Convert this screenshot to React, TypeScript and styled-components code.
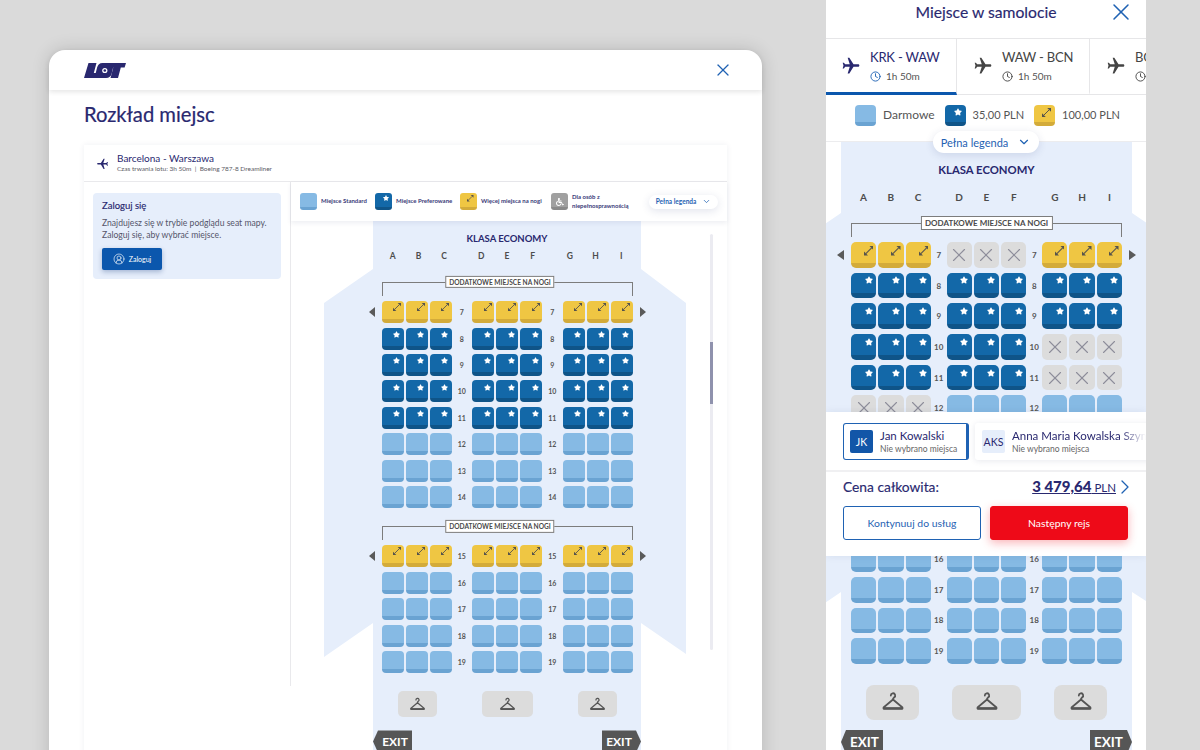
import React from 'react';
import styled, { createGlobalStyle, ThemeProvider } from 'styled-components';
import { Clock, ChevronDown, ChevronRight, CircleUserRound, X } from 'lucide-react';
import { FaStar, FaWheelchair } from 'react-icons/fa';
import { MdFlight } from 'react-icons/md';

const NAVY = '#29286f';
const BLUE = '#1f62b3';
const CABIN = '#e6eefb';
const FONT = 'Lato, "Noto Sans", sans-serif';

type SeatKind = 'std' | 'pref' | 'extra' | 'taken';

const SEAT_COLORS: Record<SeatKind, [string, string]> = {
  std: ['#86bae4', '#6aa3d2'],
  pref: ['#1368a8', '#0f5488'],
  extra: ['#efc643', '#d3ab3a'],
  taken: ['#dcdcdc', '#dcdcdc'],
};

// seat map proportions for the modal and for the phone view
const desktopMap = {
  seat: 22,
  seatH: 22,
  aisle: 20.5,
  rowGap: 4.4,
  radius: 4,
  band: 4,
  numSize: 7,
  star: 7,
  arrow: 8,
  arrowPadTop: 2,
  arrowPadRight: 2.3,
  cross: 19,
  iconPad: 3.2,
  width: 268,
  classSize: 9.5,
  classTop: 11.5,
  letterCell: 25.7,
  letterGroup: 11.5,
  letterSize: 8.5,
  letterTop: 6.5,
  bracketTop: 21,
  bracketWidth: 251,
  labelSize: 6.6,
  labelPad: 3,
  labelShift: -7,
  arrowH: 5,
  arrowW: 6,
  arrowGap: 7,
  sectionGap: 18.5,
  wingOut: 49,
  wingOutRight: 45,
  wingTop: 48,
  wingBody: 354,
  wingDrop: 34,
  hangerH: 26,
  hangerW: 39,
  hangerMid: 51,
  hangerGap: 45,
  hangerTop: 18.5,
  hangerRadius: 5,
  hangerIcon: 17,
  exitW: 39,
  exitH: 22,
  exitSize: 12,
  exitTop: 13,
};

const phoneMap = {
  ...desktopMap,
  seat: 25.33,
  seatH: 25.7,
  aisle: 15.5,
  rowGap: 5,
  radius: 5,
  band: 4.5,
  numSize: 8,
  star: 8,
  arrow: 9.5,
  arrowPadTop: 4,
  arrowPadRight: 3,
  cross: 22,
  iconPad: 3.8,
  width: 291,
  classSize: 11.3,
  classTop: 22,
  letterCell: 27.33,
  letterGroup: 13.7,
  letterSize: 10,
  letterTop: 15,
  bracketTop: 20,
  bracketWidth: 271,
  labelSize: 8,
  labelPad: 3.5,
  labelShift: 0,
  arrowH: 5.5,
  arrowW: 7,
  arrowGap: 7,
  sectionGap: 14,
  wingOut: 70,
  wingOutRight: 70,
  wingTop: 71,
  wingBody: 379,
  wingDrop: 48,
  hangerH: 35,
  hangerW: 53,
  hangerMid: 69,
  hangerGap: 33,
  hangerTop: 21,
  hangerRadius: 8,
  hangerIcon: 24,
  exitW: 42,
  exitH: 24,
  exitSize: 13.5,
  exitTop: 10,
};

type MapTheme = typeof desktopMap;
const px = (key: keyof MapTheme) => ({ theme }: { theme: any }) => `${(theme as MapTheme)[key]}px`;

const MapContext = React.createContext<MapTheme>(desktopMap);

const GlobalStyle = createGlobalStyle`
  html, body {
    margin: 0;
    height: 750px;
    overflow: hidden;
    background: #dadada;
    font-family: ${FONT};
    color: ${NAVY};
  }
  * { box-sizing: border-box; }
`;

const Stage = styled.div`
  display: flex;
  align-items: flex-start;
  gap: 64px;
  width: 1200px;
  height: 750px;
  padding-left: 49px;
  overflow: hidden;
`;

/* ---------- seat map ---------- */

const Fuselage = styled.div`
  position: relative;
  display: flex;
  flex-direction: column;
  align-items: center;
  width: ${px('width')};
  background: ${CABIN};
  flex-shrink: 0;
`;

const Wings = styled.div`
  position: absolute;
  top: ${px('wingTop')};
  left: calc(${px('wingOut')} * -1);
  right: calc(${px('wingOutRight')} * -1);
  height: calc(${px('wingBody')} + ${px('wingDrop')});
  background: ${CABIN};
  clip-path: polygon(
    ${px('wingOut')} 0,
    calc(100% - ${px('wingOutRight')}) 0,
    100% ${px('wingDrop')},
    100% calc(100% - 3px),
    calc(100% - ${px('wingOutRight')}) ${px('wingBody')},
    ${px('wingOut')} ${px('wingBody')},
    0 100%,
    0 ${px('wingDrop')}
  );
`;

const ClassName = styled.div`
  position: relative;
  margin-top: ${px('classTop')};
  font-size: ${px('classSize')};
  line-height: 12px;
  font-weight: 700;
  color: ${NAVY};
`;

const Letters = styled.div`
  position: relative;
  display: flex;
  gap: ${px('letterGroup')};
  margin-top: ${px('letterTop')};
`;

const LetterGroup = styled.div`
  display: flex;
`;

const Letter = styled.span`
  width: ${px('letterCell')};
  text-align: center;
  font-size: ${px('letterSize')};
  line-height: 1.2;
  font-weight: 700;
  color: #4c4c4c;
`;

const Bracket = styled.div<{ $first?: boolean }>`
  position: relative;
  width: ${px('bracketWidth')};
  height: 14px;
  margin-top: ${({ $first, theme }) => ($first ? theme.bracketTop : theme.sectionGap)}px;
  margin-bottom: 5px;
  border: 1px solid #7c7c7c;
  border-bottom: none;
`;

const BracketLabel = styled.span`
  position: absolute;
  top: -1px;
  left: calc(50% + ${px('labelShift')});
  transform: translate(-50%, -50%);
  padding: 1px ${px('labelPad')};
  background: #fff;
  border: 1px solid #7c7c7c;
  font-size: ${px('labelSize')};
  line-height: 1.25;
  font-weight: 700;
  white-space: nowrap;
  color: #4a4a4a;
`;

const SeatRows = styled.div`
  position: relative;
  display: flex;
  flex-direction: column;
  gap: ${px('rowGap')};
`;

const Row = styled.div`
  display: flex;
  align-items: center;
  margin: 0 calc((${px('arrowW')} + ${px('arrowGap')}) * -1);
`;

const SeatGroup = styled.div`
  display: flex;
  gap: 2px;
`;

const RowNumber = styled.span`
  width: ${px('aisle')};
  text-align: center;
  font-size: ${px('numSize')};
  font-weight: 700;
  color: #555;
`;

const ExitArrow = styled.span<{ $side: 'left' | 'right'; $show: boolean }>`
  width: 0;
  height: 0;
  visibility: ${({ $show }) => ($show ? 'visible' : 'hidden')};
  border-style: solid;
  border-color: transparent;
  border-width: ${px('arrowH')} 0;
  ${({ $side, theme }) =>
    $side === 'left'
      ? `border-right: ${theme.arrowW}px solid #5a5a5a; margin-right: ${theme.arrowGap}px;`
      : `border-left: ${theme.arrowW}px solid #5a5a5a; margin-left: ${theme.arrowGap}px;`}
`;

const seatPadding = (kind: SeatKind, theme: any) => {
  if (kind === 'pref') return `${theme.iconPad}px`;
  if (kind === 'extra') return `${theme.arrowPadTop}px ${theme.arrowPadRight}px`;
  return '0';
};

const Seat = styled.div<{ $kind: SeatKind }>`
  display: flex;
  justify-content: ${({ $kind }) => ($kind === 'taken' ? 'center' : 'flex-end')};
  align-items: ${({ $kind }) => ($kind === 'taken' ? 'center' : 'flex-start')};
  width: ${px('seat')};
  height: ${px('seatH')};
  padding: ${({ $kind, theme }) => seatPadding($kind, theme)};
  border-radius: ${px('radius')};
  background: ${({ $kind, theme }) =>
    `linear-gradient(${SEAT_COLORS[$kind][0]} calc(100% - ${theme.band}px), ${SEAT_COLORS[$kind][1]} 0)`};
  color: ${({ $kind }) => ($kind === 'pref' ? '#fff' : $kind === 'extra' ? '#55534c' : '#8d8d9a')};
`;

const Wardrobes = styled.div`
  position: relative;
  display: flex;
  justify-content: center;
  gap: ${px('hangerGap')};
  margin-top: ${px('hangerTop')};
`;

const Wardrobe = styled.div<{ $wide?: boolean }>`
  display: flex;
  align-items: center;
  justify-content: center;
  width: ${({ $wide, theme }) => ($wide ? theme.hangerMid : theme.hangerW)}px;
  height: ${px('hangerH')};
  border-radius: ${px('hangerRadius')};
  background: #dcdcdc;
`;

const Exits = styled.div`
  position: relative;
  display: flex;
  justify-content: space-between;
  width: 100%;
  margin-top: ${px('exitTop')};
`;

const ExitTag = styled.div<{ $side: 'left' | 'right' }>`
  display: flex;
  align-items: center;
  justify-content: center;
  width: ${px('exitW')};
  height: ${px('exitH')};
  padding-${({ $side }) => $side}: 5px;
  background: #565656;
  color: #fff;
  font-size: ${px('exitSize')};
  font-weight: 700;
  clip-path: ${({ $side }) =>
    $side === 'left'
      ? 'polygon(5px 0, 100% 0, 100% 100%, 5px 100%, 0 50%)'
      : 'polygon(0 0, calc(100% - 5px) 0, 100% 50%, calc(100% - 5px) 100%, 0 100%)'};
`;

const LegroomIcon: React.FC<{ size: number }> = ({ size }) => (
  <svg width={size} height={size} viewBox="0 0 10 10" fill="currentColor">
    <path d="M2 8 8 2" stroke="currentColor" strokeWidth="1.100" />
    <polygon points="10,0 10,4.200 5.800,0" />
    <polygon points="0,10 0,5.800 4.200,10" />
  </svg>
);

const HangerIcon: React.FC = () => {
  const { hangerIcon } = React.useContext(MapContext);
  return (
    <svg width={hangerIcon} height={hangerIcon} viewBox="0 0 24 24" fill="none" stroke="#555" strokeWidth="1.800">
      <path d="M9.800 5.500a2.200 2.200 0 1 1 3.300 1.900c-.7.5-1.100 1-1.100 2" strokeLinecap="round" />
      <path d="M12 9.500 2.800 17.200c-.5.500-.2 1.100.5 1.100h17.400c.7 0 1-.6.500-1.100z" strokeLinejoin="round" />
      <path d="M3 18.500h18" strokeWidth="2.600" strokeLinecap="round" />
    </svg>
  );
};

const SeatGlyph: React.FC<{ kind: SeatKind }> = ({ kind }) => {
  const map = React.useContext(MapContext);
  if (kind === 'pref') return <FaStar size={map.star} />;
  if (kind === 'extra') return <LegroomIcon size={map.arrow} />;
  if (kind === 'taken') return <X size={map.cross} strokeWidth={1.200} />;
  return null;
};

const COLUMNS = ['ABC', 'DEF', 'GHI'];

type RowData = { n: number; seats: [SeatKind, SeatKind, SeatKind] };

const uniform = (from: number, to: number, kind: SeatKind): RowData[] =>
  Array.from({ length: to - from + 1 }, (_, i) => ({ n: from + i, seats: [kind, kind, kind] }));

const SeatSection: React.FC<{ rows: RowData[]; first?: boolean }> = ({ rows, first }) => (
  <>
    <Bracket $first={first}>
      <BracketLabel>DODATKOWE MIEJSCE NA NOGI</BracketLabel>
    </Bracket>
    <SeatRows>
      {rows.map((row, index) => (
        <Row key={row.n}>
          <ExitArrow $side="left" $show={index === 0} />
          {row.seats.map((kind, group) => (
            <React.Fragment key={group}>
              <SeatGroup>
                {[0, 1, 2].map((i) => (
                  <Seat key={i} $kind={kind}>
                    <SeatGlyph kind={kind} />
                  </Seat>
                ))}
              </SeatGroup>
              {group < 2 && <RowNumber>{row.n}</RowNumber>}
            </React.Fragment>
          ))}
          <ExitArrow $side="right" $show={index === 0} />
        </Row>
      ))}
    </SeatRows>
  </>
);

const SeatMap: React.FC<{ map: MapTheme; upper: RowData[]; lower: RowData[] }> = ({ map, upper, lower }) => (
  <ThemeProvider theme={map}>
    <MapContext.Provider value={map}>
      <Fuselage>
        <Wings />
        <ClassName>KLASA ECONOMY</ClassName>
        <Letters>
          {COLUMNS.map((col) => (
            <LetterGroup key={col}>
              {col.split('').map((l) => (
                <Letter key={l}>{l}</Letter>
              ))}
            </LetterGroup>
          ))}
        </Letters>
        <SeatSection rows={upper} first />
        <SeatSection rows={lower} />
        <Wardrobes>
          <Wardrobe>
            <HangerIcon />
          </Wardrobe>
          <Wardrobe $wide>
            <HangerIcon />
          </Wardrobe>
          <Wardrobe>
            <HangerIcon />
          </Wardrobe>
        </Wardrobes>
        <Exits>
          <ExitTag $side="left">EXIT</ExitTag>
          <ExitTag $side="right">EXIT</ExitTag>
        </Exits>
      </Fuselage>
    </MapContext.Provider>
  </ThemeProvider>
);

/* ---------- legend chips ---------- */

const Chip = styled.div<{ $kind: SeatKind | 'access'; $size: number }>`
  display: flex;
  justify-content: ${({ $kind }) => ($kind === 'access' ? 'center' : 'flex-end')};
  align-items: ${({ $kind }) => ($kind === 'access' ? 'center' : 'flex-start')};
  padding: ${({ $kind, $size }) => ($kind === 'access' ? 0 : `${$size * 0.14}px ${$size * 0.18}px`)};
  flex-shrink: 0;
  width: ${({ $size }) => $size}px;
  height: ${({ $size }) => $size}px;
  border-radius: ${({ $size }) => Math.round($size * 0.2)}px;
  background: ${({ $kind, $size }) =>
    $kind === 'access'
      ? 'linear-gradient(#a0a0a0 80%, #8a8a8a 0)'
      : `linear-gradient(${SEAT_COLORS[$kind][0]} ${$size - Math.round($size * 0.2)}px, ${SEAT_COLORS[$kind][1]} 0)`};
  color: ${({ $kind }) => ($kind === 'extra' ? '#55534c' : '#fff')};
`;

const LegendPill = styled.div`
  display: flex;
  align-items: center;
  justify-content: center;
  background: #fff;
  color: ${BLUE};
  white-space: nowrap;
  box-shadow: 0 2px 8px rgba(40, 60, 120, 0.14);
`;

/* ---------- desktop modal ---------- */

const Modal = styled.div`
  width: 713px;
  height: 760px;
  margin-top: 50px;
  background: #fff;
  border-radius: 16px 16px 0 0;
  box-shadow: 0 0 18px rgba(0, 0, 0, 0.16);
  flex-shrink: 0;
`;

const ModalHeader = styled.header`
  display: flex;
  align-items: center;
  justify-content: space-between;
  height: 40px;
  padding: 0 29px 0 35px;
  border-radius: 16px 16px 0 0;
  box-shadow: 0 2px 5px rgba(0, 0, 0, 0.1);
`;

const CloseButton = styled.span`
  display: flex;
  color: ${BLUE};
`;

const ModalBody = styled.div`
  padding: 0 35px;
`;

const PageTitle = styled.h1`
  margin: 12px 0 18px;
  font-size: 20.2px;
  line-height: 25px;
  font-weight: 400;
  color: ${NAVY};
  -webkit-text-stroke: 0.2px ${NAVY};
`;

const FlightCard = styled.section`
  width: 643px;
  background: #fff;
  box-shadow: 0 0 6px rgba(30, 40, 90, 0.07);
`;

const FlightHead = styled.div`
  display: flex;
  align-items: center;
  gap: 8px;
  height: 37px;
  padding-left: 12px;
  border-bottom: 1px solid #e9e9ec;
  color: ${NAVY};
`;

const FlightName = styled.div`
  font-size: 10px;
  line-height: 11px;
  color: ${NAVY};
`;

const FlightMeta = styled.div`
  font-size: 6.5px;
  line-height: 9px;
  color: #5b5b66;
`;

const FlightColumns = styled.div`
  display: flex;
`;

const Sidebar = styled.aside`
  width: 207px;
  height: 504px;
  padding: 11px 9px;
  border-right: 1px solid #e9e9ec;
  flex-shrink: 0;
`;

const LoginBox = styled.div`
  height: 86px;
  padding: 7px 9px;
  border-radius: 4px;
  background: ${CABIN};
`;

const LoginTitle = styled.div`
  font-size: 9.5px;
  line-height: 12px;
  color: ${NAVY};
  -webkit-text-stroke: 0.15px ${NAVY};
`;

const LoginText = styled.p`
  margin: 5px 0 7px;
  font-size: 8.6px;
  line-height: 12px;
  white-space: nowrap;
  color: #55556a;
`;

const LoginButton = styled.button`
  display: flex;
  align-items: center;
  justify-content: center;
  gap: 4px;
  width: 60px;
  height: 22px;
  padding: 0;
  border: none;
  border-radius: 2px;
  background: #0b57ad;
  color: #fff;
  font-family: ${FONT};
  font-size: 7px;
  box-shadow: 0 2px 5px rgba(10, 50, 120, 0.3);
`;

const MapPane = styled.div`
  position: relative;
  flex: 1;
  min-width: 0;
`;

const DeskLegend = styled.div`
  position: relative;
  z-index: 2;
  display: flex;
  align-items: center;
  height: 39px;
  padding: 0 9px;
  background: #fff;
  box-shadow: 0 2px 5px rgba(30, 40, 90, 0.08);
`;

const DeskLegendItem = styled.div<{ $width: number }>`
  display: flex;
  align-items: center;
  gap: 4px;
  width: ${({ $width }) => $width}px;
  font-size: 6px;
  line-height: 8.5px;
  font-weight: 700;
  color: #3a3a78;
  flex-shrink: 0;
`;

const DeskPill = styled(LegendPill)`
  gap: 6px;
  width: 69px;
  height: 14px;
  margin-left: auto;
  border-radius: 7px;
  font-size: 6.5px;
  font-weight: 700;
`;

const PaneScroll = styled.div`
  padding-left: 82px;
  height: 700px;
`;

const ScrollTrack = styled.div`
  position: absolute;
  top: 52px;
  left: 419px;
  width: 3px;
  height: 416px;
  border-radius: 2px;
  background: #ebebf1;
`;

const ScrollThumb = styled.div`
  width: 100%;
  height: 62px;
  margin-top: 108px;
  background: #8f92ad;
`;

/* ---------- phone view ---------- */

const Phone = styled.div`
  position: relative;
  width: 320px;
  height: 750px;
  background: #fff;
  overflow: hidden;
  flex-shrink: 0;
`;

const PhoneHeader = styled.header`
  position: relative;
  display: flex;
  align-items: center;
  justify-content: center;
  height: 39px;
  padding-bottom: 15px;
  border-bottom: 1px solid #e6e6e8;
  font-size: 15.7px;
  color: ${NAVY};
  -webkit-text-stroke: 0.15px ${NAVY};
`;

const PhoneClose = styled.span`
  position: absolute;
  top: -2px;
  right: 11px;
  display: flex;
  color: ${BLUE};
`;

const Tabs = styled.nav`
  display: flex;
  height: 56px;
  border-bottom: 1px solid #e6e6e8;
`;

const Tab = styled.div<{ $active?: boolean; $width: number }>`
  display: flex;
  align-items: center;
  gap: 9px;
  width: ${({ $width }) => $width}px;
  padding-left: ${({ $active }) => ($active ? 15 : 16)}px;
  border-right: 1px solid #e6e6e8;
  border-bottom: 3px solid ${({ $active }) => ($active ? '#0b57ad' : 'transparent')};
  margin-bottom: -1px;
  color: ${({ $active }) => ($active ? NAVY : '#444')};
  flex-shrink: 0;
  overflow: hidden;
`;

const TabRoute = styled.div`
  font-size: 13px;
  line-height: 17px;
  letter-spacing: -0.2px;
  white-space: nowrap;
`;

const TabTime = styled.div<{ $active?: boolean }>`
  display: flex;
  align-items: center;
  gap: 5px;
  margin-top: 4px;
  font-size: 10px;
  line-height: 13px;
  color: #555;
  svg {
    color: ${({ $active }) => ($active ? BLUE : '#444')};
  }
`;

const PriceLegend = styled.div`
  position: relative;
  z-index: 2;
  display: flex;
  gap: 10px;
  height: 47px;
  padding: 10px 0 0 29px;
  background: #fff;
  border-bottom: 1px solid #ececee;
`;

const PriceItem = styled.div<{ $price?: boolean }>`
  display: flex;
  align-items: flex-start;
  align-self: flex-start;
  gap: 7px;
  font-size: ${({ $price }) => ($price ? 11 : 12)}px;
  line-height: 20px;
  color: #555;
  white-space: nowrap;
`;

const PhonePill = styled(LegendPill)`
  position: absolute;
  top: 131px;
  left: 107px;
  z-index: 3;
  gap: 9px;
  width: 106px;
  height: 22px;
  border-radius: 11px;
  font-size: 11px;
`;

const PhoneScroll = styled.div`
  padding-left: 15px;
`;

const BottomPanel = styled.div`
  position: absolute;
  top: 412px;
  left: 0;
  z-index: 4;
  width: 100%;
  height: 144px;
  background: #fff;
  box-shadow: 0 0 8px rgba(30, 40, 90, 0.08);
`;

const Passengers = styled.div`
  display: flex;
  gap: 6px;
  height: 60px;
  padding: 11px 0 0 17px;
  border-bottom: 2px solid #f0f0f2;
  overflow: hidden;
`;

const PassengerCard = styled.div<{ $active?: boolean }>`
  display: flex;
  align-items: center;
  gap: 7px;
  height: 37px;
  padding-left: 7px;
  border-radius: 3px;
  flex-shrink: 0;
  background: #fff;
  ${({ $active }) =>
    $active
      ? `width: 126px; padding-left: 6px; border: 1px solid ${BLUE}; border-right-width: 3px;`
      : 'width: 190px; box-shadow: 0 1px 6px rgba(30, 40, 90, 0.1);'}
`;

const Avatar = styled.span<{ $active?: boolean }>`
  display: flex;
  align-items: center;
  justify-content: center;
  width: 23px;
  height: 23px;
  border-radius: 2px;
  background: ${({ $active }) => ($active ? '#1256a8' : CABIN)};
  color: ${({ $active }) => ($active ? '#fff' : NAVY)};
  font-size: 10.5px;
  flex-shrink: 0;
`;

const PassengerName = styled.div<{ $fade?: boolean }>`
  font-size: 11.5px;
  line-height: 14px;
  color: ${NAVY};
  white-space: nowrap;
  ${({ $fade }) =>
    $fade && 'width: 134px; overflow: hidden; -webkit-mask-image: linear-gradient(90deg, #000 80%, transparent);'}
`;

const PassengerHint = styled.div`
  margin-top: 1px;
  font-size: 8.5px;
  line-height: 11px;
  color: #666;
  white-space: nowrap;
`;

const TotalRow = styled.div`
  display: flex;
  align-items: center;
  justify-content: space-between;
  height: 30px;
  padding: 0 18px 0 17px;
  margin-top: -1px;
  font-size: 13.8px;
  color: ${NAVY};
  -webkit-text-stroke: 0.15px ${NAVY};
`;

const TotalAmount = styled.div`
  display: flex;
  align-items: center;
`;

const AmountLink = styled.span`
  font-size: 11.5px;
  text-decoration: underline;
  color: ${NAVY};
  -webkit-text-stroke: 0;
  b {
    font-size: 15px;
    font-weight: 900;
  }
`;

const PriceChevron = styled(ChevronRight)`
  margin: 1px -9px 0 -3px;
  color: ${BLUE};
`;

const Actions = styled.div`
  display: flex;
  gap: 9px;
  padding: 5px 18px 0 17px;
`;

const ActionButton = styled.button<{ $primary?: boolean }>`
  width: 138px;
  height: 34px;
  padding: 0;
  border-radius: 3px;
  border: 1px solid ${({ $primary }) => ($primary ? '#ee0a18' : BLUE)};
  background: ${({ $primary }) => ($primary ? '#ee0a18' : '#fff')};
  color: ${({ $primary }) => ($primary ? '#fff' : BLUE)};
  font-family: ${FONT};
  font-size: 10.4px;
  box-shadow: ${({ $primary }) => ($primary ? '0 3px 10px rgba(238, 10, 24, 0.3)' : 'none')};
`;

const LotLogo: React.FC = () => (
  <svg width="42" height="15" viewBox="0 0 42 15" fill={NAVY}>
    <polygon points="4.500,0 12.500,0 9.800,10 15.500,10 14,15 0,15" />
    <path d="M18.500 0h7c3 0 4.300 2 3.600 4.600l-1.400 5.800c-.7 2.800-2.600 4.600-5.600 4.600h-7c-3 0-4.200-2-3.500-4.600l1.500-5.800C13.800 1.800 15.500 0 18.500 0z" />
    <circle cx="20.800" cy="7.500" r="2.600" fill="#fff" />
    <circle cx="20.800" cy="7.500" r="1.300" fill={NAVY} />
    <polygon points="26,0 42,0 40.600,4.600 36.800,4.600 34,15 26.500,15 29.300,4.600 24.800,4.600" />
  </svg>
);

const deskUpper: RowData[] = [...uniform(7, 7, 'extra'), ...uniform(8, 11, 'pref'), ...uniform(12, 14, 'std')];
const lowerRows: RowData[] = [...uniform(15, 15, 'extra'), ...uniform(16, 19, 'std')];
const phoneUpper: RowData[] = [
  { n: 7, seats: ['extra', 'taken', 'extra'] },
  ...uniform(8, 9, 'pref'),
  { n: 10, seats: ['pref', 'pref', 'taken'] },
  { n: 11, seats: ['pref', 'pref', 'taken'] },
  { n: 12, seats: ['taken', 'std', 'std'] },
  ...uniform(13, 14, 'std'),
];

const TABS = [
  { route: 'KRK - WAW', width: 131, active: true },
  { route: 'WAW - BCN', width: 133 },
  { route: 'BCN - KRK', width: 133 },
];

const App: React.FC = () => (
  <>
    <GlobalStyle />
    <Stage>
      <Modal>
        <ModalHeader>
          <LotLogo />
          <CloseButton>
            <X size={20} strokeWidth={1.500} />
          </CloseButton>
        </ModalHeader>
        <ModalBody>
          <PageTitle>Rozkład miejsc</PageTitle>
          <FlightCard>
            <FlightHead>
              <MdFlight size={13} style={{ transform: 'rotate(-90deg)' }} />
              <div>
                <FlightName>Barcelona - Warszawa</FlightName>
                <FlightMeta>Czas trwania lotu: 3h 50m&nbsp; |&nbsp; Boeing 787-8 Dreamliner</FlightMeta>
              </div>
            </FlightHead>
            <FlightColumns>
              <Sidebar>
                <LoginBox>
                  <LoginTitle>Zaloguj się</LoginTitle>
                  <LoginText>
                    Znajdujesz się w trybie podglądu seat mapy.
                    <br />
                    Zaloguj się, aby wybrać miejsce.
                  </LoginText>
                  <LoginButton>
                    <CircleUserRound size={12} strokeWidth={1.300} />
                    Zaloguj
                  </LoginButton>
                </LoginBox>
              </Sidebar>
              <MapPane>
                <DeskLegend>
                  <DeskLegendItem $width={75}>
                    <Chip $kind="std" $size={17} />
                    Miejsce Standard
                  </DeskLegendItem>
                  <DeskLegendItem $width={85}>
                    <Chip $kind="pref" $size={17}>
                      <FaStar size={6} />
                    </Chip>
                    Miejsce Preferowane
                  </DeskLegendItem>
                  <DeskLegendItem $width={91}>
                    <Chip $kind="extra" $size={17}>
                      <LegroomIcon size={6.500} />
                    </Chip>
                    Więcej miejsca na nogi
                  </DeskLegendItem>
                  <DeskLegendItem $width={90}>
                    <Chip $kind="access" $size={17}>
                      <FaWheelchair size={8} />
                    </Chip>
                    <span>
                      Dla osób z
                      <br />
                      niepełnosprawnością
                    </span>
                  </DeskLegendItem>
                  <DeskPill>
                    Pełna legenda
                    <ChevronDown size={9} />
                  </DeskPill>
                </DeskLegend>
                <PaneScroll>
                  <SeatMap map={desktopMap} upper={deskUpper} lower={lowerRows} />
                </PaneScroll>
                <ScrollTrack>
                  <ScrollThumb />
                </ScrollTrack>
              </MapPane>
            </FlightColumns>
          </FlightCard>
        </ModalBody>
      </Modal>

      <Phone>
        <PhoneHeader>
          Miejsce w samolocie
          <PhoneClose>
            <X size={28} strokeWidth={1.300} />
          </PhoneClose>
        </PhoneHeader>
        <Tabs>
          {TABS.map((tab) => (
            <Tab key={tab.route} $active={tab.active} $width={tab.width}>
              <MdFlight size={20} style={{ transform: 'rotate(90deg)', flexShrink: 0 }} />
              <div>
                <TabRoute>{tab.route}</TabRoute>
                <TabTime $active={tab.active}>
                  <Clock size={11} strokeWidth={2} />
                  1h 50m
                </TabTime>
              </div>
            </Tab>
          ))}
        </Tabs>
        <PriceLegend>
          <PriceItem>
            <Chip $kind="std" $size={21} />
            Darmowe
          </PriceItem>
          <PriceItem $price>
            <Chip $kind="pref" $size={21}>
              <FaStar size={8} />
            </Chip>
            35,00 PLN
          </PriceItem>
          <PriceItem $price>
            <Chip $kind="extra" $size={21}>
              <LegroomIcon size={9} />
            </Chip>
            100,00 PLN
          </PriceItem>
        </PriceLegend>
        <PhonePill>
          Pełna legenda
          <ChevronDown size={14} />
        </PhonePill>
        <PhoneScroll>
          <SeatMap map={phoneMap} upper={phoneUpper} lower={lowerRows} />
        </PhoneScroll>
        <BottomPanel>
          <Passengers>
            <PassengerCard $active>
              <Avatar $active>JK</Avatar>
              <div>
                <PassengerName>Jan Kowalski</PassengerName>
                <PassengerHint>Nie wybrano miejsca</PassengerHint>
              </div>
            </PassengerCard>
            <PassengerCard>
              <Avatar>AKS</Avatar>
              <div>
                <PassengerName $fade>Anna Maria Kowalska Szymańska</PassengerName>
                <PassengerHint>Nie wybrano miejsca</PassengerHint>
              </div>
            </PassengerCard>
          </Passengers>
          <TotalRow>
            Cena całkowita:
            <TotalAmount>
              <AmountLink>
                <b>3 479,64</b> PLN
              </AmountLink>
              <PriceChevron size={24} strokeWidth={1.300} />
            </TotalAmount>
          </TotalRow>
          <Actions>
            <ActionButton>Kontynuuj do usług</ActionButton>
            <ActionButton $primary>Następny rejs</ActionButton>
          </Actions>
        </BottomPanel>
      </Phone>
    </Stage>
  </>
);

export default App;
